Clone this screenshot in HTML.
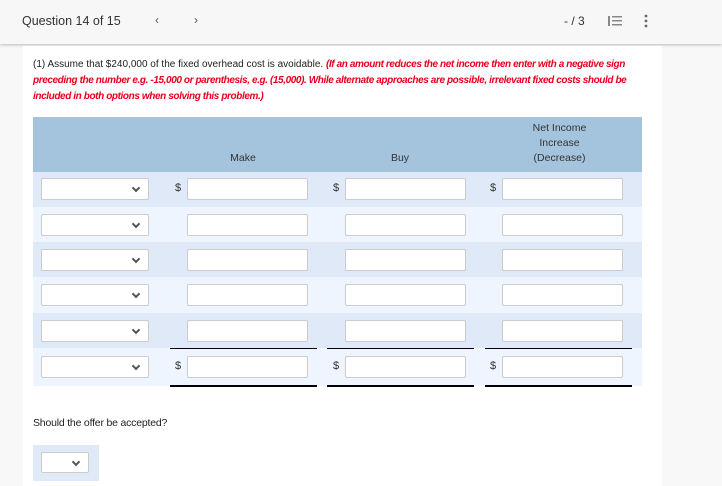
<!DOCTYPE html>
<html><head><style>
*{margin:0;padding:0;box-sizing:border-box}
body{width:722px;height:486px;background:#f8f8f8;font-family:"Liberation Sans",sans-serif;position:relative;overflow:hidden}
.top{position:absolute;left:0;top:0;width:722px;height:44px;background:#f7f7f7;box-shadow:0 1px 3px rgba(0,0,0,.25)}
.a{position:absolute}
.panel{position:absolute;left:23px;top:46px;width:639px;height:440px;background:#fff}
.txt{position:absolute;left:33px;top:57px;font-size:10px;line-height:16px;color:#222;letter-spacing:0;white-space:nowrap}
.red{color:#e8001c;font-style:italic;font-weight:bold;letter-spacing:-0.4px}
.hdr{position:absolute;left:33px;top:117px;width:609px;height:55px;background:#a4c4de}
.h{position:absolute;font-size:10.5px;color:#333;text-align:center;line-height:15px}
.row{position:absolute;left:33px;width:609px}
.sel{position:absolute;width:108px;height:22px;background:#fff;border:1px solid #ccc;border-radius:2px}
.sel:after{content:"";position:absolute;right:9px;top:6px;width:4px;height:4px;border-right:2px solid #555;border-bottom:2px solid #555;transform:rotate(45deg)}
.in{position:absolute;width:121px;height:22px;background:#fff;border:1px solid #ccc;border-radius:2px}
.d{position:absolute;font-size:11px;color:#333}
.ul{position:absolute;height:1px;background:#000}
</style></head><body>
<div class="top">
<div class="a" style="left:22px;top:14px;font-size:12.5px;color:#333">Question 14 of 15</div>
<div class="a" style="left:155px;top:13px;font-size:12px;color:#555">&lsaquo;</div>
<div class="a" style="left:194px;top:13px;font-size:12px;color:#555">&rsaquo;</div>
<div class="a" style="left:564px;top:14px;font-size:12px;color:#333">- / 3</div>
<svg class="a" style="left:608px;top:15px" width="14" height="12"><g fill="#888"><rect x="0" y="1" width="2" height="10"/><rect x="4" y="1" width="10" height="1.5"/><rect x="4" y="5" width="10" height="1.5"/><rect x="4" y="9" width="10" height="1.5"/></g></svg>
<svg class="a" style="left:644px;top:14px" width="4" height="14"><g fill="#666"><circle cx="2" cy="2" r="1.4"/><circle cx="2" cy="7" r="1.4"/><circle cx="2" cy="12" r="1.4"/></g></svg>
</div>
<div class="panel"></div>
<div class="txt">(1) Assume that $240,000 of the fixed overhead cost is avoidable. <span class="red">(If an amount reduces the net income then enter with a negative sign</span><br><span class="red">preceding the number e.g. -15,000 or parenthesis, e.g. (15,000). While alternate approaches are possible, irrelevant fixed costs should be</span><br><span class="red">included in both options when solving this problem.)</span></div>
<div class="hdr">
<div class="h" style="left:150px;top:34px;width:120px">Make</div>
<div class="h" style="left:307px;top:34px;width:120px">Buy</div>
<div class="h" style="left:464px;top:4px;width:125px">Net Income<br>Increase<br>(Decrease)</div>
</div>
<div class="row" style="top:172px;height:35px;background:#dfe9f7"></div>
<div class="row" style="top:207px;height:35px;background:#eef5fe"></div>
<div class="row" style="top:242px;height:35px;background:#dfe9f7"></div>
<div class="row" style="top:277px;height:36px;background:#eef5fe"></div>
<div class="row" style="top:313px;height:35px;background:#dfe9f7"></div>
<div class="row" style="top:348px;height:38px;background:#eef5fe"></div>

<div class="sel" style="left:41px;top:178px"></div>
<div class="sel" style="left:41px;top:214px"></div>
<div class="sel" style="left:41px;top:249px"></div>
<div class="sel" style="left:41px;top:284px"></div>
<div class="sel" style="left:41px;top:320px"></div>
<div class="sel" style="left:41px;top:356px"></div>

<div class="in" style="left:187px;top:178px"></div><div class="in" style="left:345px;top:178px"></div><div class="in" style="left:502px;top:178px"></div>
<div class="in" style="left:187px;top:214px"></div><div class="in" style="left:345px;top:214px"></div><div class="in" style="left:502px;top:214px"></div>
<div class="in" style="left:187px;top:249px"></div><div class="in" style="left:345px;top:249px"></div><div class="in" style="left:502px;top:249px"></div>
<div class="in" style="left:187px;top:284px"></div><div class="in" style="left:345px;top:284px"></div><div class="in" style="left:502px;top:284px"></div>
<div class="in" style="left:187px;top:320px"></div><div class="in" style="left:345px;top:320px"></div><div class="in" style="left:502px;top:320px"></div>
<div class="in" style="left:187px;top:356px"></div><div class="in" style="left:345px;top:356px"></div><div class="in" style="left:502px;top:356px"></div>

<div class="d" style="left:175px;top:182px">$</div><div class="d" style="left:333px;top:182px">$</div><div class="d" style="left:490px;top:182px">$</div>
<div class="d" style="left:175px;top:360px">$</div><div class="d" style="left:333px;top:360px">$</div><div class="d" style="left:490px;top:360px">$</div>

<div class="ul" style="left:170px;top:348px;width:147px"></div>
<div class="ul" style="left:327px;top:348px;width:147px"></div>
<div class="ul" style="left:485px;top:348px;width:147px"></div>
<div class="ul" style="left:170px;top:385px;width:147px;height:2px"></div>
<div class="ul" style="left:327px;top:385px;width:147px;height:2px"></div>
<div class="ul" style="left:485px;top:385px;width:147px;height:2px"></div>

<div class="a" style="left:33px;top:417px;font-size:10.5px;color:#222;letter-spacing:-0.2px">Should the offer be accepted?</div>
<div class="a" style="left:33px;top:445px;width:66px;height:36px;background:#dfe9f7"></div>
<div class="sel" style="left:41px;top:452px;width:48px;height:21px"></div>
</body></html>
